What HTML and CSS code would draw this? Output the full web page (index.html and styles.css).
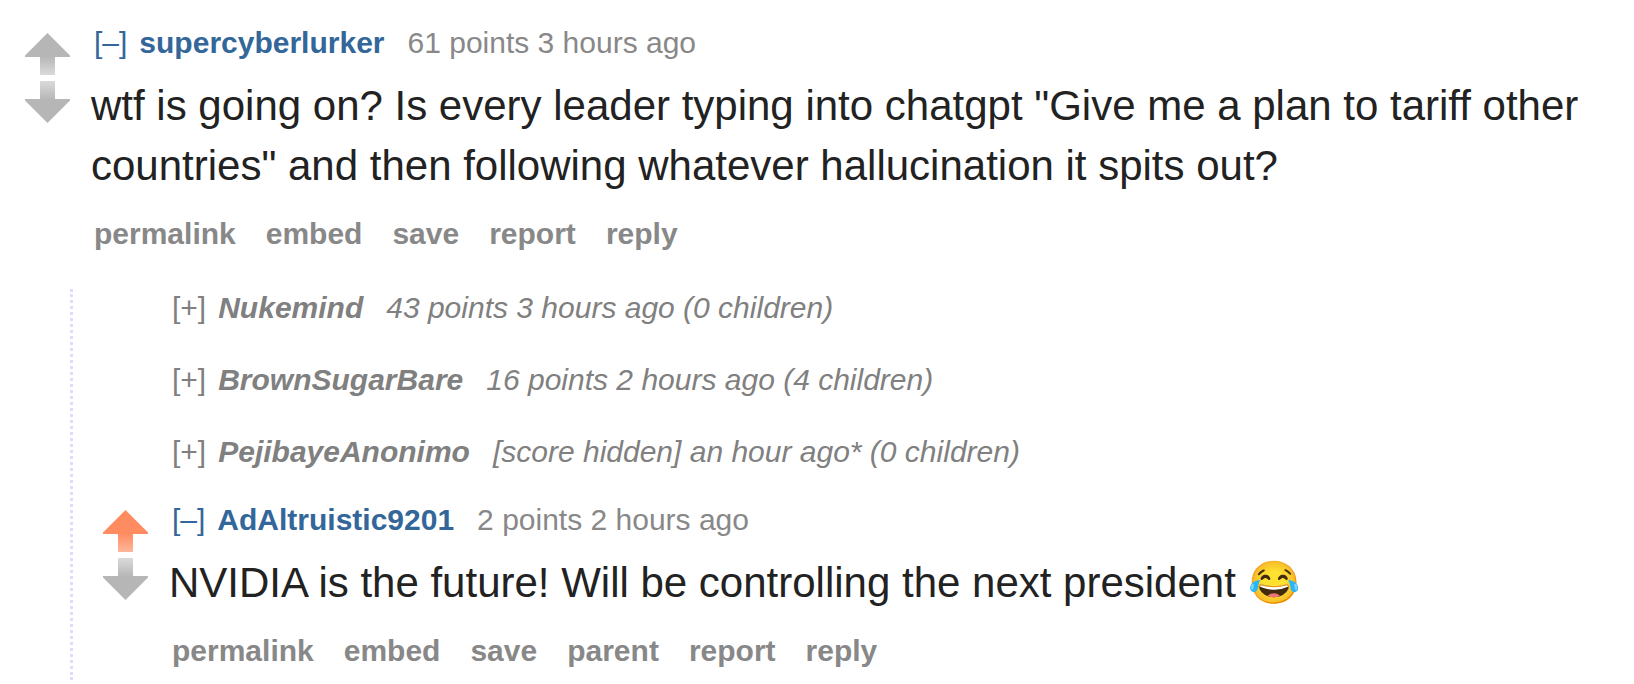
FILE: index.html
```html
<!DOCTYPE html>
<html lang="en">
<head>
  <meta charset="UTF-8">
  <meta name="viewport" content="width=device-width, initial-scale=1">
  <title>Comments</title>
  <link rel="stylesheet" href="styles.css">
</head>
<body>
  <!-- shared arrow shape and its gradients -->
  <svg class="defs" aria-hidden="true">
    <defs>
      <linearGradient id="gray" x1="0" y1="0" x2="0" y2="1">
        <stop offset="0.55" stop-color="#b6b6b6"/>
        <stop offset="1" stop-color="#dadada"/>
      </linearGradient>
      <linearGradient id="orange" x1="0" y1="0" x2="0" y2="1">
        <stop offset="0.55" stop-color="#ff8b60"/>
        <stop offset="1" stop-color="#ffb69b"/>
      </linearGradient>
      <path id="arrow" d="M22.5 0 L45 22.5 V24 H30 V42 H15 V24 H0 V22.5 Z"/>
    </defs>
  </svg>

  <main class="thread">
    <article class="comment">
      <div class="votes">
        <button class="arrow" aria-label="upvote"><svg viewBox="0 0 45 42"><use href="#arrow" fill="url(#gray)"/></svg></button>
        <button class="arrow down" aria-label="downvote"><svg viewBox="0 0 45 42"><use href="#arrow" fill="url(#gray)"/></svg></button>
      </div>
      <div class="entry">
        <p class="tagline">
          <a href="#" class="expand">[–]</a>
          <a href="#" class="author">supercyberlurker</a>
          <span>61 points 3 hours ago</span>
        </p>
        <p class="text">wtf is going on? Is every leader typing into chatgpt "Give me a plan to tariff other countries" and then following whatever hallucination it spits out?</p>
        <ul class="buttons">
          <li><a href="#">permalink</a></li>
          <li><a href="#">embed</a></li>
          <li><a href="#">save</a></li>
          <li><a href="#">report</a></li>
          <li><a href="#">reply</a></li>
        </ul>
      </div>
    </article>

    <div class="children">
      <article class="collapsed">
        <p class="tagline">
          <a href="#" class="expand">[+]</a>
          <a href="#" class="author">Nukemind</a>
          <span>43 points 3 hours ago (0 children)</span>
        </p>
      </article>
      <article class="collapsed">
        <p class="tagline">
          <a href="#" class="expand">[+]</a>
          <a href="#" class="author">BrownSugarBare</a>
          <span>16 points 2 hours ago (4 children)</span>
        </p>
      </article>
      <article class="collapsed">
        <p class="tagline">
          <a href="#" class="expand">[+]</a>
          <a href="#" class="author">PejibayeAnonimo</a>
          <span>[score hidden] an hour ago* (0 children)</span>
        </p>
      </article>

      <article class="comment">
        <div class="votes">
          <button class="arrow" aria-label="upvote" aria-pressed="true"><svg viewBox="0 0 45 42"><use href="#arrow" fill="url(#orange)"/></svg></button>
          <button class="arrow down" aria-label="downvote"><svg viewBox="0 0 45 42"><use href="#arrow" fill="url(#gray)"/></svg></button>
        </div>
        <div class="entry">
          <p class="tagline">
            <a href="#" class="expand">[–]</a>
            <a href="#" class="author">AdAltruistic9201</a>
            <span>2 points 2 hours ago</span>
          </p>
          <p class="text">NVIDIA is the future! Will be controlling the next president 😂</p>
          <ul class="buttons">
            <li><a href="#">permalink</a></li>
            <li><a href="#">embed</a></li>
            <li><a href="#">save</a></li>
            <li><a href="#">parent</a></li>
            <li><a href="#">report</a></li>
            <li><a href="#">reply</a></li>
          </ul>
        </div>
      </article>
    </div>
  </main>
</body>
</html>
```
FILE: styles.css
```css
body {
  margin: 0;
  background-color: #fff;
  color: #222;
  font-family: "Liberation Sans", Arial, sans-serif;
  font-size: 30px;
  line-height: 36px;
}

p,
ul {
  margin: 0;
  padding: 0;
}

a {
  text-decoration: none;
}

a:hover {
  text-decoration: underline;
}

.defs {
  position: absolute;
  width: 0;
  height: 0;
}

.thread {
  padding: 25px 25px 3px;
}

.comment {
  display: flex;
  gap: 21px;
}

/* Vote arrows */
.votes {
  display: flex;
  flex-direction: column;
  flex-shrink: 0;
  gap: 6px;
  padding-top: 8px;
}

.arrow {
  width: 45px;
  height: 42px;
  padding: 0;
  border: none;
  background: none;
  cursor: pointer;
}

.arrow svg {
  display: block;
  width: 100%;
  height: 100%;
}

.down svg {
  transform: rotate(180deg);
}

.entry {
  flex: 1;
  min-width: 0;
}

.tagline {
  display: flex;
  flex-wrap: wrap;
  padding-left: 3px;
  color: #888;
}

.tagline a {
  color: #369;
}

.expand {
  margin-right: 12px;
}

.author {
  margin-right: 23px;
  font-weight: bold;
}

.text {
  margin-top: 15px;
  font-size: 42px;
  line-height: 60px;
}

.buttons {
  display: flex;
  flex-wrap: wrap;
  gap: 30px;
  margin-top: 20px;
  padding-left: 3px;
  list-style: none;
  font-weight: bold;
}

.buttons a {
  color: #888;
}

/* Replies */
.children {
  margin: 37px 0 0 45px;
  padding: 1px 0 11px 30px;
  border-left: 3px dotted #ddf;
}

.collapsed {
  margin-bottom: 36px;
  padding-left: 66px;
}

.collapsed .tagline,
.collapsed .tagline a {
  color: #808080;
}

.collapsed .author,
.collapsed span {
  font-style: italic;
}

.collapsed + .comment {
  margin-top: -4px;
}
```
